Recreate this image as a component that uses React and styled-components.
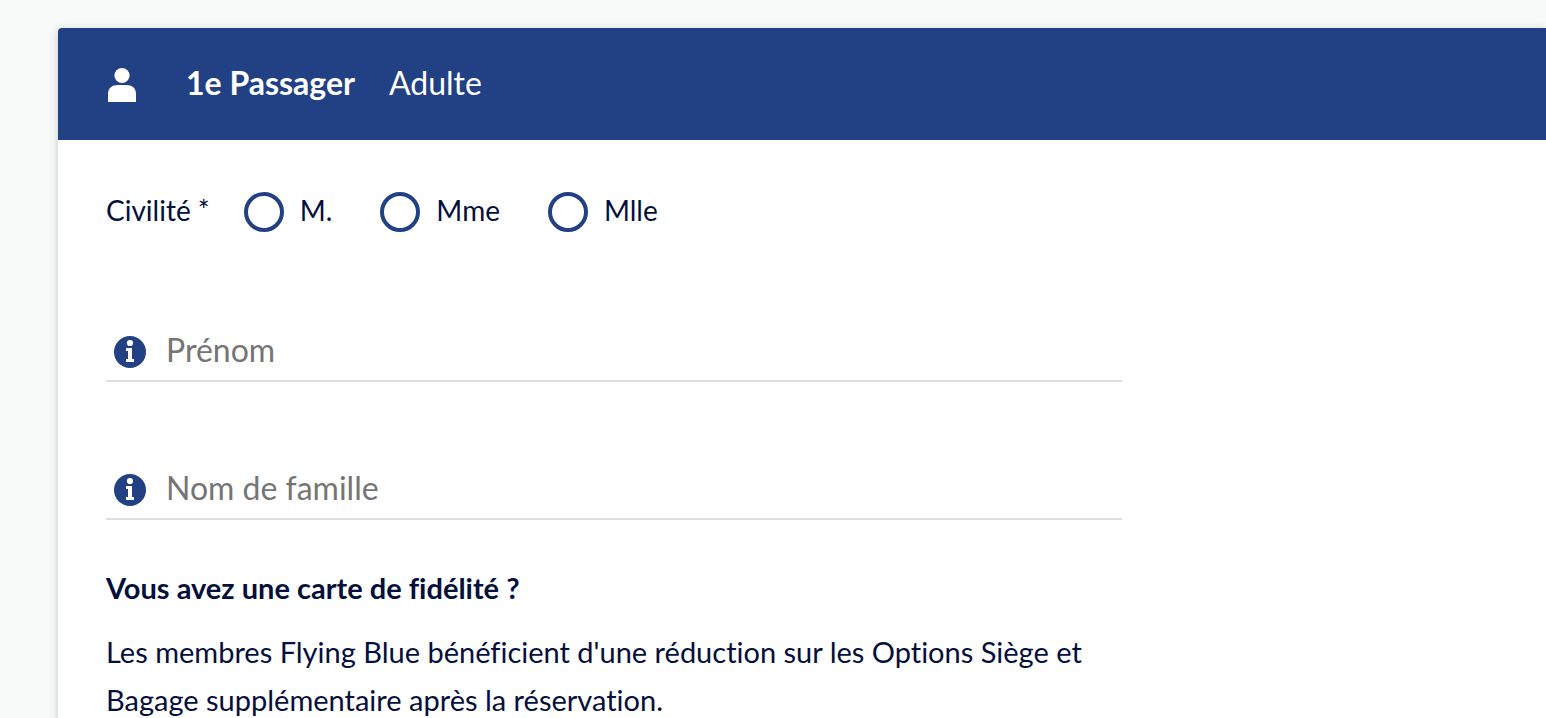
import React from 'react';

import styled, { createGlobalStyle } from 'styled-components';

const GlobalStyle = createGlobalStyle`
  * {
    box-sizing: border-box;
  }
  body {
    margin: 0;
    background: #f8faf9;
    color: #050f3c;
    font-family: Lato, "Noto Sans", sans-serif;
    font-size: 29px;
    line-height: 48px;
    font-variant-ligatures: none;
  }
`;

const Page = styled.main`
  height: 100vh;
  overflow: hidden;
  padding: 28px 0 0 58px;
`;

const Card = styled.section`
  min-height: 100%;
  background: #fff;
  border-radius: 4px 0 0 0;
  box-shadow: 0 2px 10px rgba(0, 0, 0, 0.2);
`;

const Header = styled.header`
  display: flex;
  align-items: center;
  height: 112px;
  padding: 0 50px;
  border-radius: 4px 0 0 0;
  background: #224184;
  color: #fff;
  font-size: 32px;
  line-height: 46px;
`;

const PersonIcon = styled.svg`
  width: 28px;
  height: 36px;
  margin-right: 50px;
`;

const Title = styled.h2`
  margin: 0 34px 0 0;
  padding-bottom: 2px;
  font-size: inherit;
  font-weight: 700;
`;

const PassengerType = styled.span`
  padding-bottom: 2px;
`;

const Form = styled.form`
  max-width: 1112px;
  padding: 52px 48px 0;
`;

const Civility = styled.div`
  display: flex;
  align-items: flex-start;
  height: 40px;
  margin-bottom: 96px;
  font-size: 28px;
  line-height: 36px;
`;

const CivilityLabel = styled.span`
  margin-right: 34px;
`;

const RadioLabel = styled.label`
  display: flex;
  align-items: flex-start;
  gap: 16px;
  margin-right: 48px;
`;

const Radio = styled.input`
  appearance: none;
  width: 40px;
  height: 40px;
  margin: 0;
  border: 4px solid #224184;
  border-radius: 50%;
  background: #fff;
  &:checked {
    box-shadow: inset 0 0 0 6px #fff;
    background: #224184;
  }
`;

const Field = styled.div`
  display: flex;
  align-items: center;
  gap: 20px;
  padding: 0 8px 4px;
  border-bottom: 2px solid #dedede;
  & + & {
    margin-top: 84px;
  }
`;

const InfoIcon = styled.svg`
  display: block;
  width: 32px;
  height: 32px;
`;

const Input = styled.input`
  flex: 1;
  min-width: 0;
  height: 48px;
  padding: 0 0 6px;
  border: 0;
  outline: none;
  background: transparent;
  color: inherit;
  font-family: inherit;
  font-size: 32px;
  &::placeholder {
    color: #757575;
    opacity: 1;
  }
`;

const Question = styled.h3`
  margin: 44px 0 16px;
  font-size: inherit;
  font-weight: 700;
`;

const Text = styled.p`
  margin: 0;
`;

const civilities = ['M.', 'Mme', 'Mlle'];

function TextField({ name, label }) {
  return (
    <Field>
      <InfoIcon viewBox="0 0 32 32" aria-hidden="true">
        <circle cx="16" cy="16" r="16" fill="#224184" />
        <circle cx="16" cy="7" r="3.1" fill="#fff" />
        <path d="M12 12h6v11h2v3h-8v-3h2v-8h-2z" fill="#fff" />
      </InfoIcon>
      <Input type="text" name={name} placeholder={label} aria-label={label} />
    </Field>
  );
}

export default function App() {
  return (
    <Page>
      <GlobalStyle />
      <Card>
        <Header>
          <PersonIcon viewBox="0 0 28 36" fill="#fff" aria-hidden="true">
            <circle cx="14" cy="9.5" r="7.6" />
            <path d="M0 36V28C0 22 4 19 10 19h8c6 0 10 3 10 9v8z" />
          </PersonIcon>
          <Title>1e Passager</Title>
          <PassengerType>Adulte</PassengerType>
        </Header>
        <Form>
          <Civility role="radiogroup" aria-labelledby="civility">
            <CivilityLabel id="civility">Civilité *</CivilityLabel>
            {civilities.map((civility) => (
              <RadioLabel key={civility}>
                <Radio type="radio" name="civility" value={civility} />
                {civility}
              </RadioLabel>
            ))}
          </Civility>
          <TextField name="firstName" label="Prénom" />
          <TextField name="lastName" label="Nom de famille" />
          <Question>Vous avez une carte de fidélité ?</Question>
          <Text>
            Les membres Flying Blue bénéficient d'une réduction sur les Options Siège et
            Bagage supplémentaire après la réservation.
          </Text>
        </Form>
      </Card>
    </Page>
  );
}
